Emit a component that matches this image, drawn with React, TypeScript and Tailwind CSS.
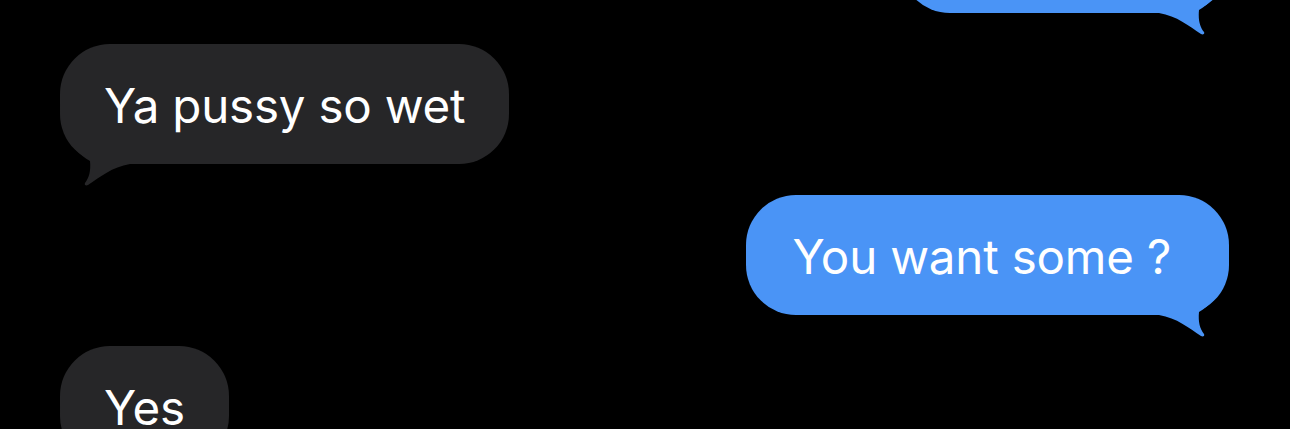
const GRAY = "#262628";
const BLUE = "#4a94f6";

function Tail({ side, color }: { side: "left" | "right"; color: string }) {
  // drawn in bubble-relative coords, mirrored for the sender side
  return (
    <svg
      aria-hidden
      width="72"
      height="85"
      viewBox="0 60 72 85"
      className={
        side === "left"
          ? "pointer-events-none absolute left-0 top-[60px]"
          : "pointer-events-none absolute right-0 top-[60px] -scale-x-100"
      }
    >
      <path
        d="M0 60 C0 86 10 105 30 117 C31 127 29 134 25 139 C24 141 26 142 28 141 C40 133 52 123 70 120 L70 60 Z"
        fill={color}
      />
    </svg>
  );
}

function Bubble({
  text,
  side,
  pad = "px-[44px]",
  className = "",
}: {
  text: string;
  side: "left" | "right";
  pad?: string;
  className?: string;
}) {
  const color = side === "left" ? GRAY : BLUE;
  return (
    <div
      className={`relative flex h-[120px] items-center rounded-[50px] pt-[4px] ${pad} ${
        side === "left" ? "self-start bg-[#262628]" : "self-end bg-[#4a94f6]"
      } ${className}`}
    >
      <Tail side={side} color={color} />
      <span className="relative whitespace-nowrap text-[47.5px] leading-none tracking-[-0.2px] text-white">
        {text}
      </span>
    </div>
  );
}

export default function App() {
  return (
    <div
      className="h-[429px] w-[1290px] overflow-hidden bg-black"
      style={{ fontFamily: 'Inter, "Liberation Sans", Arial, sans-serif' }}
    >
      <div className="flex flex-col gap-[31px] pl-[60px] pr-[61px]">
        <Bubble text="" side="right" className="-mt-[107px] w-[329px]" />
        <Bubble text="Ya pussy so wet" side="left" />
        <Bubble text="You want some ?" side="right" pad="pl-[46px] pr-[58px]" />
        <Bubble text="Yes" side="left" />
      </div>
    </div>
  );
}
